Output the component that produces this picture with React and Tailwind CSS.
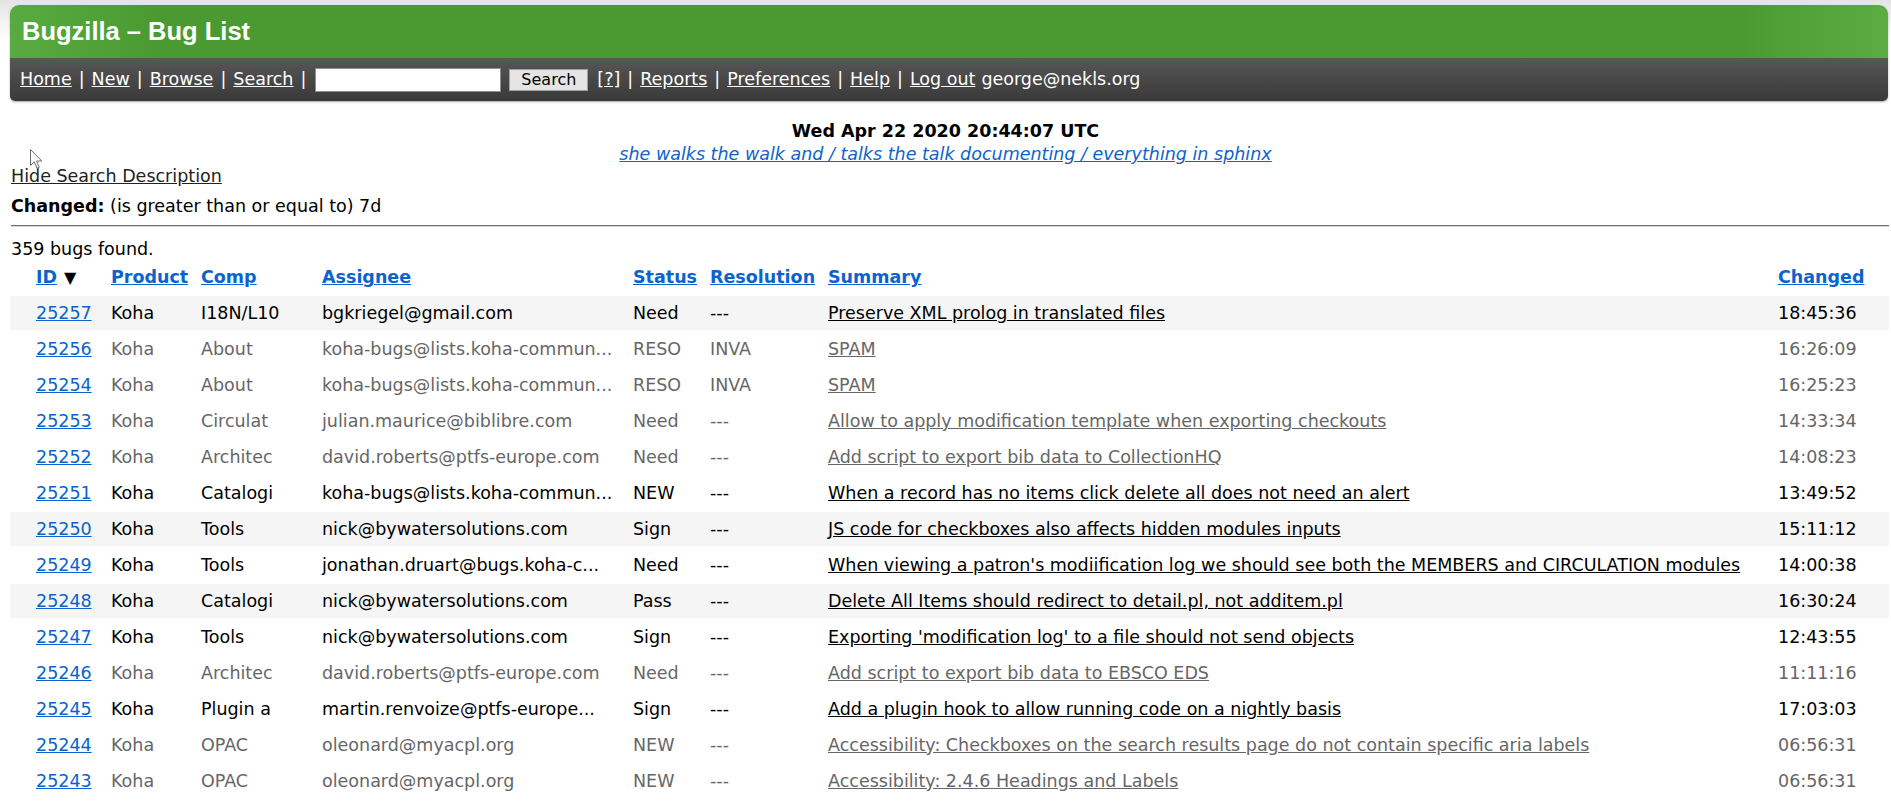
import React from "react";

// Bugzilla bug list page

const ROWS = [
  { id: "25257", comp: "I18N/L10", who: "bgkriegel@gmail.com", st: "Need", res: "---", sum: "Preserve XML prolog in translated files", ch: "18:45:36", dim: false, alt: true },
  { id: "25256", comp: "About", who: "koha-bugs@lists.koha-commun...", st: "RESO", res: "INVA", sum: "SPAM", ch: "16:26:09", dim: true },
  { id: "25254", comp: "About", who: "koha-bugs@lists.koha-commun...", st: "RESO", res: "INVA", sum: "SPAM", ch: "16:25:23", dim: true },
  { id: "25253", comp: "Circulat", who: "julian.maurice@biblibre.com", st: "Need", res: "---", sum: "Allow to apply modification template when exporting checkouts", ch: "14:33:34", dim: true },
  { id: "25252", comp: "Architec", who: "david.roberts@ptfs-europe.com", st: "Need", res: "---", sum: "Add script to export bib data to CollectionHQ", ch: "14:08:23", dim: true },
  { id: "25251", comp: "Catalogi", who: "koha-bugs@lists.koha-commun...", st: "NEW", res: "---", sum: "When a record has no items click delete all does not need an alert", ch: "13:49:52", dim: false },
  { id: "25250", comp: "Tools", who: "nick@bywatersolutions.com", st: "Sign", res: "---", sum: "JS code for checkboxes also affects hidden modules inputs", ch: "15:11:12", dim: false, alt: true },
  { id: "25249", comp: "Tools", who: "jonathan.druart@bugs.koha-c...", st: "Need", res: "---", sum: "When viewing a patron's modiification log we should see both the MEMBERS and CIRCULATION modules", ch: "14:00:38", dim: false },
  { id: "25248", comp: "Catalogi", who: "nick@bywatersolutions.com", st: "Pass", res: "---", sum: "Delete All Items should redirect to detail.pl, not additem.pl", ch: "16:30:24", dim: false, alt: true },
  { id: "25247", comp: "Tools", who: "nick@bywatersolutions.com", st: "Sign", res: "---", sum: "Exporting 'modification log' to a file should not send objects", ch: "12:43:55", dim: false },
  { id: "25246", comp: "Architec", who: "david.roberts@ptfs-europe.com", st: "Need", res: "---", sum: "Add script to export bib data to EBSCO EDS", ch: "11:11:16", dim: true },
  { id: "25245", comp: "Plugin a", who: "martin.renvoize@ptfs-europe...", st: "Sign", res: "---", sum: "Add a plugin hook to allow running code on a nightly basis", ch: "17:03:03", dim: false },
  { id: "25244", comp: "OPAC", who: "oleonard@myacpl.org", st: "NEW", res: "---", sum: "Accessibility: Checkboxes on the search results page do not contain specific aria labels", ch: "06:56:31", dim: true },
  { id: "25243", comp: "OPAC", who: "oleonard@myacpl.org", st: "NEW", res: "---", sum: "Accessibility: 2.4.6 Headings and Labels", ch: "06:56:31", dim: true },
];

const GRID = "grid grid-cols-[75px_90px_121px_311px_77px_118px_1fr_84px] items-center pl-[26px] pr-[27px]";

function Sep() {
  return <span className="mx-[7px]">|</span>;
}

export default function App() {
  return (
    <div className="min-h-screen bg-[linear-gradient(#e4e4e4,#ffffff_40px)] font-['DejaVu_Sans',sans-serif] text-[17.5px] text-black relative">
      <div className="pl-[10px] pr-[3px] pt-[5px]">
        <div className="rounded-t-[9px] rounded-b-[5px] overflow-hidden shadow-[0_1px_2px_rgba(0,0,0,0.35)]">
          <div className="h-[53px] flex items-center pl-[12px] bg-[linear-gradient(90deg,#58ab40,#4a9a31_8%,#4a9a31_92%,#5aad43)]">
            <span className="font-['Liberation_Sans',sans-serif] font-bold text-[25.5px] text-white">Bugzilla – Bug List</span>
          </div>
          <div className="h-[43px] flex items-center pl-[10px] bg-[linear-gradient(#575757,#393939)] text-white">
            <a className="underline">Home</a><Sep /><a className="underline">New</a><Sep /><a className="underline">Browse</a><Sep /><a className="underline">Search</a><Sep />
            <span className="ml-[2px] w-[186px] h-[24px] bg-white border border-[#8f8f8f]"></span>
            <span className="ml-[8px] w-[79px] h-[22px] bg-[#e4e4e4] border border-[#a0a0a0] text-black text-[16px] flex items-center justify-center">Search</span>
            <a className="ml-[9px] underline">[?]</a><Sep /><a className="underline">Reports</a><Sep /><a className="underline">Preferences</a><Sep /><a className="underline">Help</a><Sep /><a className="underline">Log out</a>
            <span className="ml-[6px]">george@nekls.org</span>
          </div>
        </div>
      </div>

      <div className="mt-[19px] text-center">
        <div className="font-bold leading-[23px]">Wed Apr 22 2020 20:44:07 UTC</div>
        <div className="leading-[23px]"><a className="italic underline text-[#0b63ce]">she walks the walk and / talks the talk documenting / everything in sphinx</a></div>
      </div>

      <div className="px-[11px]">
        <div className="leading-[20px]"><a className="underline text-[#222]">Hide Search Description</a></div>
        <div className="mt-[10px] leading-[20px]"><b>Changed:</b> (is greater than or equal to) 7d</div>
      </div>
      <div className="ml-[11px] mr-[2px] mt-[9px] border-t border-[#6f6f6f] border-b border-b-[#d8d8d8]"></div>
      <div className="px-[11px] mt-[12px] leading-[20px]">359 bugs found.</div>

      <div className="pl-[10px] pr-[2px]">
        <div className={`${GRID} h-[37px] font-bold text-[#0b63ce]`}>
          <span className="flex items-center"><a className="underline">ID</a><span className="ml-[7px] text-black text-[16px]">▼</span></span>
          <a className="underline">Product</a>
          <a className="underline">Comp</a>
          <a className="underline">Assignee</a>
          <a className="underline">Status</a>
          <a className="underline">Resolution</a>
          <a className="underline">Summary</a>
          <a className="underline">Changed</a>
        </div>
        <div className="flex flex-col gap-[2px]">
          {ROWS.map((r) => (
            <div key={r.id} className={`${GRID} h-[34px] whitespace-nowrap ${r.alt ? "bg-[#f5f5f5]" : ""} ${r.dim ? "text-[#666666]" : "text-black"}`}>
              <a className="underline text-[#0b63ce]">{r.id}</a>
              <span>Koha</span>
              <span>{r.comp}</span>
              <span>{r.who}</span>
              <span>{r.st}</span>
              <span>{r.res}</span>
              <span><a className="underline">{r.sum}</a></span>
              <span>{r.ch}</span>
            </div>
          ))}
        </div>
      </div>

      <svg className="absolute left-[30px] top-[149px]" width="13" height="21" viewBox="0 0 13 21">
        <path d="M0.5 0.5 L0.5 16.5 L4.3 12.8 L7 19.2 L9.2 18.3 L6.6 12 L11.8 12 Z" fill="#fff" stroke="#6a6a6a" strokeWidth="1" />
      </svg>
    </div>
  );
}
